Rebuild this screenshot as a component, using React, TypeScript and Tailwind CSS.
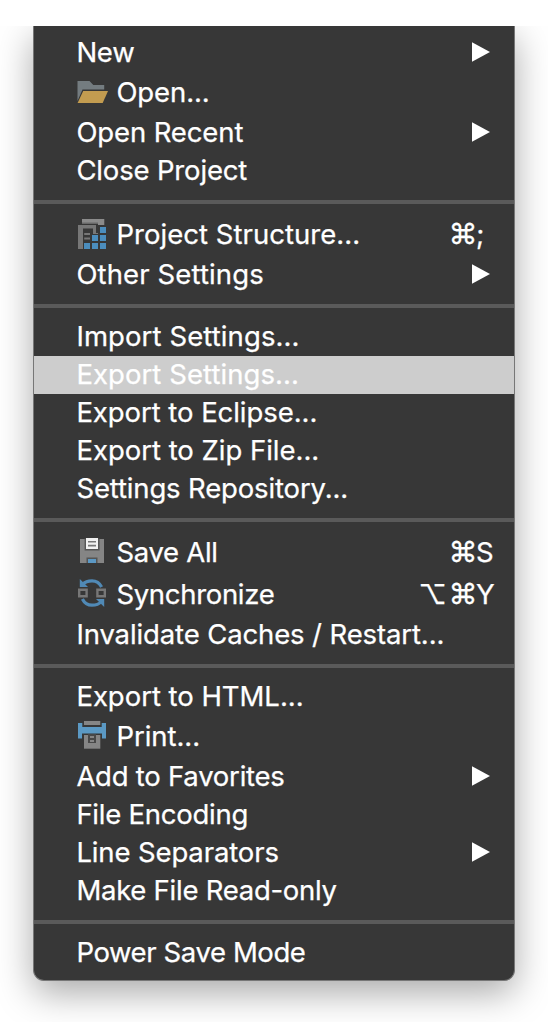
import type { ReactNode } from "react";

function FolderIcon() {
  return (
    <svg viewBox="0 0 32 32" className="size-8">
      <path d="M1.5 4H13.5L17.3 8H28.2V12.5H6.5L1.5 24Z" fill="#747c80" />
      <path d="M7.2 14H32L26.7 26H1.6Z" fill="#c39c50" />
    </svg>
  );
}

function StructureIcon() {
  return (
    <svg viewBox="0 0 32 32" className="size-8">
      <path d="M6 0H28.3V6H22V4H6Z" fill="#8b8b8b" />
      <path d="M6 3.5H22V5H6Z" fill="#686868" />
      <path d="M2 6H20V14H17V9.5H7V30H2Z" fill="#777" />
      <path d="M8.2 14H14V16H8.2ZM8.2 18.5H14V20.5H8.2ZM17 14H22V15H17Z" fill="#777" />
      <path d="M24 8h6v6h-6zM16 16h6v6h-6zM24 16h6v6h-6zM8 24h6v6H8zM16 24h6v6h-6zM24 24h6v6h-6z" fill="#4b8dbd" />
    </svg>
  );
}

function SaveIcon() {
  return (
    <svg viewBox="0 0 32 32" className="size-8">
      <path d="M4 2H28V26H4Z" fill="#858585" />
      <path d="M8.6 1.5H23.6V13.5H8.6ZM10.5 20.5H21.5V26H10.5Z" fill="#555" />
      <path d="M10 1H22V12H10Z" fill="#f0f0f0" />
      <path d="M12 4H20V5.6H12ZM12 7.8H20V9.4H12Z" fill="#777" />
      <path d="M12 22H20V26H12Z" fill="#5b98c4" />
    </svg>
  );
}

function SyncIcon() {
  return (
    <svg viewBox="0 0 32 32" className="size-8">
      <g fill="none" stroke="#5089b5" strokeWidth="3.2">
        <path d="M6.5 5.5Q10 1.8 16 1.8Q22.5 1.8 25.6 8" />
        <path d="M25.5 22.5Q22 26.2 16 26.2Q9.5 26.2 6.4 20" />
      </g>
      <path d="M3.8 0V8H12ZM28.2 28V20H20Z" fill="#5089b5" />
      <path d="M3.2 10.7H10.6V17.3H3.2ZM21.4 10.7H28.8V17.3H21.4Z" fill="none" stroke="#777" strokeWidth="2.4" />
    </svg>
  );
}

function PrintIcon() {
  return (
    <svg viewBox="0 0 32 32" className="size-8">
      <path d="M8 0H24.3V4H8Z" fill="#858585" />
      <path d="M2 2H6.3V6H25.7V2H30V17.5H26V12.5H6V17.5H2Z" fill="#5b99c4" />
      <path d="M8 14H24.3V27.7H8Z" fill="#858585" />
      <path d="M12 13H20V22H12Z" fill="#484848" />
      <path d="M14 15H18V17H14ZM14 19H18V21H14Z" fill="#858585" />
    </svg>
  );
}

function Row({
  label,
  tracking = "",
  icon,
  keys,
  submenu,
  active,
}: {
  label: string;
  tracking?: string;
  icon?: ReactNode;
  keys?: string[];
  submenu?: boolean;
  active?: boolean;
}) {
  return (
    <li
      className={`flex shrink-0 items-center pl-[42px] ${icon ? "h-[42px]" : "h-[38px]"} ${active ? "bg-[#cdcdcd]" : ""}`}
    >
      {icon && <span className="mr-[8.4px] block size-8 shrink-0">{icon}</span>}
      <span className={`-mt-0.5 whitespace-nowrap leading-[36px] ${icon ? "" : "ml-[0.4px]"} ${tracking}`}>
        {label}
      </span>
      {submenu && (
        <svg viewBox="0 0 18 20" className="-mt-0.5 mr-6 ml-auto h-5 w-[18px]">
          <path d="M0 0.3L18 10L0 19.7Z" fill="#fff" />
        </svg>
      )}
      {keys && (
        <span className="-mt-0.5 ml-auto flex pr-[18px] leading-[36px]">
          {keys.map((k) => (
            <span
              key={k}
              className={k === "⌥" ? "w-[30px]" : k === "⌘" ? "w-[27.5px] text-[29px]" : "w-5"}
            >
              {k}
            </span>
          ))}
        </span>
      )}
    </li>
  );
}

function Separator() {
  return <li className="my-2.5 h-1 shrink-0 bg-[#5a5a5a]" />;
}

export default function App() {
  return (
    <div className="h-[1022px] w-[548px] bg-white pt-[26px]">
      <div className="h-[996px] overflow-hidden pl-[33px]">
        <ul className="flex h-[955px] w-[482px] flex-col rounded-b-[11px] border-x border-b border-[#777] bg-[#373737] pt-2 font-['Inter',sans-serif] text-[27.5px] text-white shadow-[0_12px_36px_rgba(0,0,0,0.34)] [-webkit-text-stroke:0.25px_white]">
          <Row label="New" tracking="tracking-[-0.25px]" submenu />
          <Row label="Open..." tracking="tracking-[-0.1px]" icon={<FolderIcon />} />
          <Row label="Open Recent" tracking="tracking-[-0.12px]" submenu />
          <Row label="Close Project" tracking="tracking-[-0.16px]" />
          <Separator />
          <Row label="Project Structure..." tracking="tracking-[0.04px]" icon={<StructureIcon />} keys={["⌘", ";"]} />
          <Row label="Other Settings" tracking="tracking-[0.12px]" submenu />
          <Separator />
          <Row label="Import Settings..." tracking="tracking-[0.1px]" />
          <Row label="Export Settings..." tracking="tracking-[0.06px]" active />
          <Row label="Export to Eclipse..." tracking="tracking-[-0.06px]" />
          <Row label="Export to Zip File..." tracking="tracking-[-0.02px]" />
          <Row label="Settings Repository..." tracking="tracking-[-0.15px]" />
          <Separator />
          <Row label="Save All" tracking="tracking-[-0.3px]" icon={<SaveIcon />} keys={["⌘", "S"]} />
          <Row label="Synchronize" tracking="tracking-[-0.31px]" icon={<SyncIcon />} keys={["⌥", "⌘", "Y"]} />
          <Row label="Invalidate Caches / Restart..." tracking="tracking-[-0.12px]" />
          <Separator />
          <Row label="Export to HTML..." tracking="tracking-[-0.03px]" />
          <Row label="Print..." tracking="tracking-[-0.05px]" icon={<PrintIcon />} />
          <Row label="Add to Favorites" tracking="tracking-[-0.24px]" submenu />
          <Row label="File Encoding" tracking="tracking-[-0.25px]" />
          <Row label="Line Separators" tracking="tracking-[-0.13px]" submenu />
          <Row label="Make File Read-only" tracking="tracking-[-0.26px]" />
          <Separator />
          <Row label="Power Save Mode" tracking="tracking-[-0.4px]" />
        </ul>
      </div>
    </div>
  );
}
